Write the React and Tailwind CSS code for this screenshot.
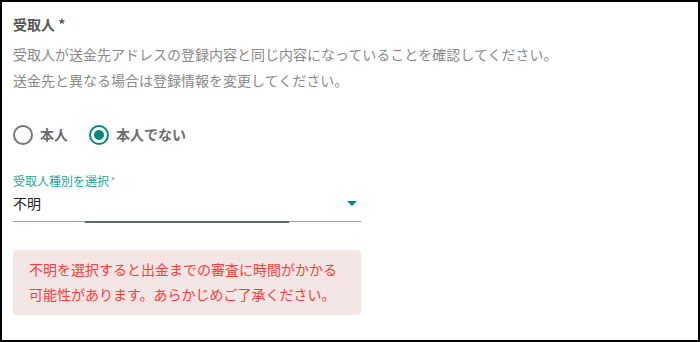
import React, { useState } from 'react';

const font = { fontFamily: '"Noto Sans CJK JP", "Noto Sans", sans-serif' };

function Radio({ checked, label, onClick }) {
  return (
    <button type="button" onClick={onClick} className="flex items-center gap-[7px]">
      <span
        className={`flex h-5 w-5 items-center justify-center rounded-full border-2 ${
          checked ? 'border-[#00897b]' : 'border-[#757575]'
        }`}
      >
        {checked && <span className="h-[10px] w-[10px] rounded-full bg-[#00897b]" />}
      </span>
      <span className="text-[14px] font-bold text-[#6d6d6d]">{label}</span>
    </button>
  );
}

export default function App() {
  const [isSelf, setIsSelf] = useState(false);

  return (
    <div style={font} className="h-[342px] w-[700px] border-2 border-black bg-white">
      <div className="pl-[11px] pt-[12px]">
        {/* Title */}
        <div className="text-[14px] font-bold leading-[20px] text-[#555]">受取人 *</div>

        {/* Description */}
        <div className="mt-[7px] text-[14px] leading-[26px] text-[#8a8a8a]">
          <p>受取人が送金先アドレスの登録内容と同じ内容になっていることを確認してください。</p>
          <p>送金先と異なる場合は登録情報を変更してください。</p>
        </div>

        {/* Radios */}
        <div className="mt-[31px] flex items-center gap-[21px]">
          <Radio checked={isSelf} label="本人" onClick={() => setIsSelf(true)} />
          <Radio checked={!isSelf} label="本人でない" onClick={() => setIsSelf(false)} />
        </div>

        {/* Select */}
        <div className="mt-[28px] w-[348px]">
          <div className="text-[12px] leading-[16px] text-[#26a69a]">
            受取人種別を選択<span className="ml-[2px] align-top text-[9px] text-[#e57373]">*</span>
          </div>
          <div className="flex h-[32px] items-start justify-between pr-[4px] pt-[4px]">
            <span className="text-[14px] leading-[20px] text-[#222]">不明</span>
            <svg width="10" height="5" viewBox="0 0 10 5" className="mt-[8px]">
              <path d="M0 0 L10 0 L5 5 Z" fill="#00897b" />
            </svg>
          </div>
          <div className="relative h-px bg-[#9e9e9e]">
            <div className="absolute left-[72px] top-0 h-[2px] w-[204px] bg-[#5f6b6d]" />
          </div>
        </div>

        {/* Warning */}
        <div className="mt-[28px] w-[348px] rounded-[4px] bg-[#f5e6e6] px-[16px] pb-[8px] pt-[7px] text-[14px] leading-[25px] text-[#ff3b3b]">
          <p>不明を選択すると出金までの審査に時間がかかる</p>
          <p>可能性があります。あらかじめご了承ください。</p>
        </div>
      </div>
    </div>
  );
}
